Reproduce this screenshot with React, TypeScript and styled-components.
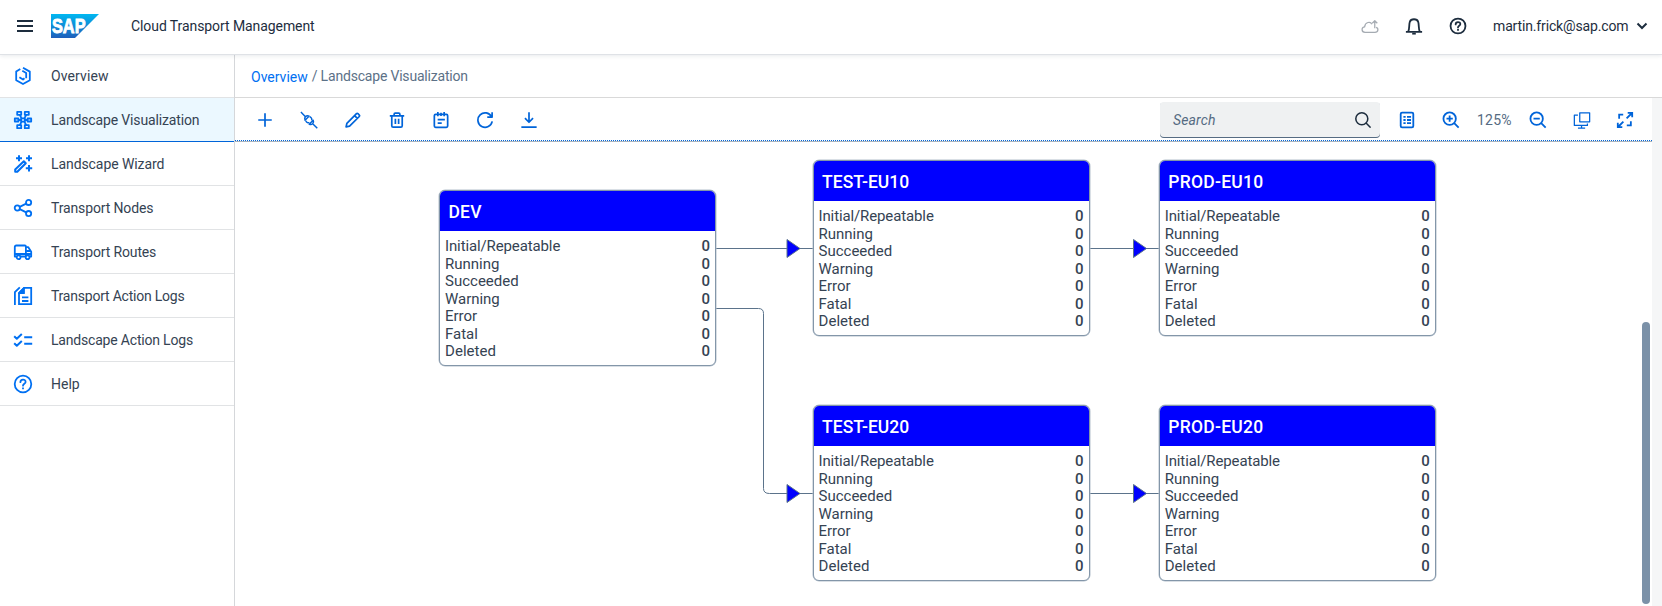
import React, { ReactNode } from 'react';
import styled, { createGlobalStyle } from 'styled-components';

const Global = createGlobalStyle`
  * { box-sizing: border-box; }
  html, body { margin: 0; height: 100%; overflow: hidden; background: #fff; }
  body { font-family: Roboto, "Liberation Sans", sans-serif; font-size: 14px; color: #1d2d3e; }
  svg { display: block; flex: none; }
`;

const Page = styled.div`
  display: flex;
  flex-direction: column;
  width: 100vw;
  height: 100vh;
`;

const Label = styled.span<{ $ls?: number; $dy?: number }>`
  letter-spacing: ${p => p.$ls ?? 0}px;
  padding-top: ${p => p.$dy ?? 0}px;
  white-space: pre;
`;

const Shell = styled.header`
  display: flex;
  align-items: center;
  height: 54px;
  flex: none;
  padding: 0 14px 2px 16px;
  position: relative;
  z-index: 1;
  background: #fff;
  box-shadow: 0 1px 0 #dfe2e6, 0 2px 4px rgba(34, 53, 72, 0.1);
`;
const ShellTitle = styled.div`
  margin-left: 32px;
  flex: 1;
`;
const Logo = styled.div`
  margin-left: 17px;
`;
const ShellActions = styled.div`
  display: flex;
  align-items: center;
`;
const ShellSlot = styled.div<{ $w: number }>`
  width: ${p => p.$w}px;
`;
const User = styled.div`
  display: flex;
  align-items: center;
  width: 155px;
  justify-content: space-between;
`;

const Body = styled.div`
  display: flex;
  flex: 1;
  min-height: 0;
`;
const Side = styled.nav`
  width: 235px;
  flex: none;
  border-right: 1px solid #d5d7da;
`;
const SideItem = styled.div<{ $active?: boolean }>`
  display: flex;
  align-items: center;
  height: 44px;
  padding: 0 0 0 13px;
  gap: 18px;
  border-bottom: 1px solid ${p => (p.$active ? '#0064d9' : '#e1e3e5')};
  background: ${p => (p.$active ? '#ebf8ff' : '#fff')};
  color: #354353;
`;

const Main = styled.main`
  display: flex;
  flex-direction: column;
  flex: 1;
  min-width: 0;
`;
const Crumbs = styled.div`
  display: flex;
  align-items: center;
  height: 44px;
  padding: 1px 0 0 16px;
  color: #5c7187;
  border-bottom: 1px solid #d9d9d9;
  flex: none;
`;
const CrumbLink = styled.a`
  color: #0070f2;
  padding-top: 1px;
  margin-right: 4px;
`;
const Content = styled.div`
  display: flex;
  flex: 1;
  min-height: 0;
`;
const Gutter = styled.div`
  width: 10px;
  background: #f5f6f7;
`;
const Pane = styled.section`
  display: flex;
  flex-direction: column;
  flex: 1;
  min-width: 0;
`;
const Toolbar = styled.div`
  display: flex;
  align-items: center;
  justify-content: space-between;
  height: 44px;
  flex: none;
  padding: 0 18px 0 21px;
  border-bottom: 1px solid #a9b4be;
  background: repeating-linear-gradient(90deg, #0064d9 0 1px, #fff 1px 2px) bottom / 100% 1px no-repeat;
`;
const Tools = styled.div`
  display: flex;
  align-items: center;
  gap: 26px;
`;
const RightTools = styled.div`
  display: flex;
  align-items: center;
`;
const Search = styled.div`
  display: flex;
  align-items: center;
  justify-content: space-between;
  width: 220px;
  height: 36px;
  margin-right: 18px;
  padding: 0 9px 0 13px;
  border-radius: 4px;
  background: #eff1f2;
  box-shadow: inset 0 -1px 0 #556b82;
  color: #556b82;
  font-style: italic;
`;
const Zoom = styled.div`
  width: 36px;
  margin: 0 16px 0 17px;
  color: #556b82;
`;
const Gap = styled.div<{ $w: number }>`
  width: ${p => p.$w}px;
`;

const Viewport = styled.div`
  display: flex;
  flex: 1;
  min-height: 0;
`;
const Canvas = styled.div`
  position: relative;
  flex: 1;
`;
const Links = styled.svg`
  position: absolute;
  left: 0;
  top: 0;
`;
const Track = styled.div`
  display: flex;
  align-items: flex-end;
  width: 10px;
  padding-bottom: 2px;
`;
const Thumb = styled.div`
  width: 8px;
  height: 282px;
  border-radius: 4px;
  background: #7b91a8;
`;

const Node = styled.article<{ $x: number; $y: number }>`
  position: absolute;
  left: ${p => p.$x}px;
  top: ${p => p.$y}px;
  width: 277px;
  height: 176px;
  border: 1.5px solid #8396a9;
  border-radius: 6px;
  background: #fff;
  overflow: hidden;
  box-shadow: 0 0 0 0.5px #b4c0cc;
`;
const NodeTitle = styled.h2`
  display: flex;
  align-items: center;
  height: 40px;
  margin: 0;
  padding: 2px 0 0 8.5px;
  background: #0000ff;
  color: #fff;
  font-size: 17.5px;
  font-weight: 500;
`;
const Rows = styled.div`
  padding: 7px 5px 0 5px;
`;
const Row = styled.div`
  display: flex;
  justify-content: space-between;
  height: 17.5px;
  line-height: 17.5px;
  font-size: 15px;
  color: #354353;
`;
const Count = styled.b`
  font-weight: 500;
  font-size: 15px;
`;

const Icon = ({ s = 20, c = '#0070f2', w = 1.6, children }: { s?: number; c?: string; w?: number; children: ReactNode }) => (
  <svg width={s} height={s} viewBox="0 0 20 20" fill="none" stroke={c} strokeWidth={w} strokeLinejoin="round">
    {children}
  </svg>
);

const HelpShape = () => (
  <>
    <circle cx="10" cy="10" r="8.3" />
    <path d="M7.4 8.2c0-3.4 5.2-3.4 5.2-.3 0 1.9-2.6 1.9-2.6 3.8" strokeLinecap="round" />
    <path d="M10 13.400v1.900" />
  </>
);

const NAV: { label: string; ls?: number; icon: ReactNode; active?: boolean }[] = [
  { label: 'Overview', ls: 0.1, icon: <><path d="M7.3 3 3.2 5.6v8.6L10 18l6.8-3.8V5.6L10 1.7" /><path d="M9.3 4.8 13.2 7v5.3M6.4 11.3l3.6 2.2 1.5-1.2" /></> },
  { label: 'Landscape Visualization', ls: -0.14, active: true, icon: <><rect x="4.2" y="1.8" width="4" height="3" /><rect x="11.8" y="1.8" width="4" height="3" /><rect x="1.8" y="8.5" width="3.6" height="3" /><rect x="8.2" y="8.4" width="3.6" height="3.2" /><rect x="14.6" y="8.5" width="3.6" height="3" /><rect x="4.2" y="15.2" width="4" height="3" /><rect x="11.8" y="15.2" width="4" height="3" /><path d="M5.4 10h2.8M11.8 10h2.8M6.8 4.8l1.8 3.6M13.2 4.8l-1.8 3.6M6.8 15.2l1.8-3.6M13.2 15.2l-1.8-3.6" /></> },
  { label: 'Landscape Wizard', ls: -0.08, icon: <><path d="M2.2 17.8v-2.3l8.6-8.3 2 2L4.3 17.8z" strokeWidth="2" /><path d="M6 1.2v6M3 4.2h6M16 1.2v6M13 4.2h6M16 11v6.4M12.8 14.2h6.4" strokeWidth="2" /></> },
  { label: 'Transport Nodes', ls: -0.14, icon: <><circle cx="4.3" cy="10" r="2.6" /><circle cx="15.6" cy="4.4" r="2.6" /><circle cx="15.6" cy="15.6" r="2.6" /><path d="M6.7 8.9l6.5-3.3M6.7 11.1l6.500 3.300" /></> },
  { label: 'Transport Routes', ls: -0.14, icon: <><path d="M3.5 14.5H1.8V5q0-1.5 1.5-1.5h8.6q1 0 1 1v10H7.3M12.9 5.2h2.4l2.900 4.600v4.700h-1.600" /><path d="M2 12h16M13.2 9h4.400" /><circle cx="5.600" cy="15.200" r="1.900" fill="#fff" /><circle cx="14.600" cy="15.200" r="1.900" fill="#fff" /></> },
  { label: 'Transport Action Logs', ls: -0.22, icon: <><path d="M1.900 19V6.200l4.900-4.800M6 18.100V7.100l5-5.200h7.200v16.200z" strokeLinejoin="miter" /><path d="M11 2v5.200H6z" fill="#0070f2" /><path d="M9 11.300h6.400M9 15h6.400" /></> },
  { label: 'Landscape Action Logs', ls: -0.19, icon: <path d="M1.200 6.200l2.600 2.500 5-4.600M1.200 13.200l2.600 2.500 5-4.600M11.200 7.300h8M11.200 13.700h8" strokeWidth="2" /> },
  { label: 'Help', icon: <HelpShape /> },
];

const LEFT: ReactNode[] = [
  <path key="a" d="M10 2.500v15M2.500 10h15" />,
  <g key="b" strokeWidth="1.600"><path d="M1 1.200l4.800 4.900M14.400 14.400l4.800 4.800" /><path d="M5.600 10.200C4.200 7 7 4.200 10.200 5.600z" /><path d="M10.800 6.400C13 7.400 13.600 9.200 12.800 10.400M6.400 10.800c1 2.200 2.800 2.800 4 2" /><path d="M10.200 14.600c2.800 1.600 6-1.600 4.400-4.400z" /></g>,
  <path key="c" d="M2.300 17.700l.9-3.900L13.900 3q.8-.8 1.600 0l1.500 1.500q.8.8 0 1.600L6.200 16.800zM11.800 5.200l3 3" />,
  <path key="d" d="M2 5.300h16M6.800 5V3.700Q6.800 2.300 8 2.300h4q1.200 0 1.200 1.400V5M4.200 5.500v10.900q0 1.600 1.500 1.600h8.600q1.500 0 1.500-1.600V5.500M8.200 8.600v5.800M11.800 8.600v5.800" />,
  <path key="e" d="M2.600 5.200q0-1.400 1.400-1.400h12q1.400 0 1.400 1.400v11.500q0 1.400-1.400 1.400H4q-1.400 0-1.400-1.400zM6.500 1v4.800M13.500 1v4.800M10 2v3.500M6.300 9.600h8M6.300 13.500h4.500" />,
  <path key="f" d="M17.300 6.500A8 8 0 1 0 18 11.500M17.900 1.500v5.300h-5.400" />,
  <path key="g" d="M10 1.500v10.800M5.500 8l4.500 4.500L14.500 8M1.500 18h17" />,
];

const NODES = [
  { name: 'DEV', ls: 0.2, x: 204, y: 48 },
  { name: 'TEST-EU10', ls: 0.05, x: 577.5, y: 18 },
  { name: 'PROD-EU10', ls: 0.27, x: 923.7, y: 18 },
  { name: 'TEST-EU20', ls: 0.05, x: 577.5, y: 263 },
  { name: 'PROD-EU20', ls: 0.27, x: 923.7, y: 263 },
];
const STATES = [
  { name: 'Initial/Repeatable', ls: -0.12 },
  { name: 'Running', ls: 0 },
  { name: 'Succeeded', ls: 0 },
  { name: 'Warning', ls: -0.05 },
  { name: 'Error', ls: 0 },
  { name: 'Fatal', ls: 0 },
  { name: 'Deleted', ls: 0.05 },
];

const Arrow = ({ x, y }: { x: number; y: number }) => (
  <path d={`M${x} ${y - 9}l13 9-13 9z`} fill="#0000ff" stroke="#5b738b" strokeWidth="1" />
);

export default function App() {
  return (
    <Page>
      <Global />
      <Shell>
        <svg width="18" height="14" viewBox="0 0 18 14" stroke="#1d2d3e" strokeWidth="2"><path d="M1 2h16M1 7h16M1 12h16" /></svg>
        <Logo>
          <svg width="48" height="24" viewBox="0 0 48 24">
            <defs><linearGradient id="sap" x1="0" y1="0" x2="0" y2="1"><stop offset="0" stopColor="#00b8f1" /><stop offset="1" stopColor="#1e5fbb" /></linearGradient></defs>
            <path d="M0 0h48L24 24H0z" fill="url(#sap)" />
            <text x="1" y="19.300" fontFamily="Liberation Sans" fontWeight="bold" fontSize="20" fill="#fff" stroke="#fff" strokeWidth=".9" textLength="33.500" lengthAdjust="spacingAndGlyphs">SAP</text>
          </svg>
        </Logo>
        <ShellTitle><Label $ls={-0.08}>Cloud Transport Management</Label></ShellTitle>
        <ShellActions>
          <ShellSlot $w={44}><Icon s={18} c="#a5abb2" w={1.4}><path d="M11.500 17H4.500C.2 17 .2 11 4 11 4.500 5.500 10.500 4.500 12 8M11.500 17h4c4 0 4.200-4.500 1.300-5.500M15.300 12.500V4.500M12.500 7l2.800-2.800L18.100 7" /></Icon></ShellSlot>
          <ShellSlot $w={44}><Icon s={18} c="#1d2d3e" w={2}><path d="M1 16.500h18M3.600 16c1.500-2 .7-7.500 1.700-10.500 1.300-4 8.100-4 9.400 0 1 3 .2 8.500 1.700 10.500" /><path d="M8 18.500h4" /></Icon></ShellSlot>
          <ShellSlot $w={44.5}><Icon s={18} c="#1d2d3e" w={2}><HelpShape /></Icon></ShellSlot>
          <User>
            <Label $ls={-0.15}>martin.frick@sap.com</Label>
            <svg width="12" height="8" viewBox="0 0 12 8" fill="none" stroke="#1d2d3e" strokeWidth="2"><path d="M1.500 1.500L6 6l4.500-4.500" /></svg>
          </User>
        </ShellActions>
      </Shell>
      <Body>
        <Side>
          {NAV.map(n => (
            <SideItem key={n.label} $active={n.active}>
              <Icon w={1.8}>{n.icon}</Icon>
              <Label $ls={n.ls} $dy={1}>{n.label}</Label>
            </SideItem>
          ))}
        </Side>
        <Main>
          <Crumbs><CrumbLink><Label>Overview</Label></CrumbLink><Label $ls={-0.19}>/ Landscape Visualization</Label></Crumbs>
          <Content>
            <Pane>
              <Toolbar>
                <Tools>{LEFT.map((p, i) => <Icon key={i} s={18} c="#0064d9" w={1.9}>{p}</Icon>)}</Tools>
                <RightTools>
                  <Search><Label $ls={0.15}>Search</Label><Icon s={16} c="#1d2d3e" w={1.9}><circle cx="8.500" cy="8.500" r="7.500" /><path d="M13.500 13.500l6 6" /></Icon></Search>
                  <Icon s={18} c="#0064d9" w={2}><rect x="3" y="1.800" width="14" height="16.400" rx="1.500" /><path d="M6 6.500h2.500M10 6.500h4.500M6 10h2.500M10 10h4.500M6 13.500h2.500M10 13.500h4.500" strokeWidth="2" /></Icon>
                  <Gap $w={26} />
                  <Icon s={18} c="#0064d9" w={2}><circle cx="8.500" cy="8.500" r="6.900" /><path d="M13.300 13.300l5.200 5.200M8.500 5v7M5 8.500h7" /></Icon>
                  <Zoom><Label $ls={0.2}>125%</Label></Zoom>
                  <Icon s={18} c="#0064d9" w={2}><circle cx="8.500" cy="8.500" r="6.900" /><path d="M13.300 13.300l5.200 5.200M5 8.500h7" /></Icon>
                  <Gap $w={26} />
                  <Icon s={18} c="#0064d9" w={1.4}><path d="M7.500 2h11v10h-11zM5.500 4.500h-4v11.500h14.500V14M9.500 16v3M5.500 19h8" /></Icon>
                  <Gap $w={25} />
                  <Icon s={18} c="#0064d9" w={2}><path d="M8 4H3.500v4.500M12 16h4.500v-4.500M11.800 8.200L17.500 2.500M13 2h5v5M8.200 11.800l-5.700 5.700M2 13v5h5" strokeLinejoin="miter" /></Icon>
                </RightTools>
              </Toolbar>
              <Viewport>
                <Canvas>
                  <Links width="1400" height="464" viewBox="0 0 1400 464" fill="none" stroke="#5b738b" strokeWidth="1">
                    <path d="M481 106.500H578M854 106.500H924M854 351.500H924M481 166.500H523.500Q528.500 166.500 528.500 171.500V346.500Q528.500 351.500 534.500 351.500H578" />
                    <Arrow x={552} y={106.5} /><Arrow x={552} y={351.5} /><Arrow x={898.5} y={106.5} /><Arrow x={898.5} y={351.5} />
                  </Links>
                  {NODES.map(n => (
                    <Node key={n.name} $x={n.x} $y={n.y}>
                      <NodeTitle><Label $ls={n.ls}>{n.name}</Label></NodeTitle>
                      <Rows>{STATES.map(s => <Row key={s.name}><Label $ls={s.ls}>{s.name}</Label><Count>0</Count></Row>)}</Rows>
                    </Node>
                  ))}
                </Canvas>
                <Track><Thumb /></Track>
              </Viewport>
            </Pane>
            <Gutter />
          </Content>
        </Main>
      </Body>
    </Page>
  );
}
